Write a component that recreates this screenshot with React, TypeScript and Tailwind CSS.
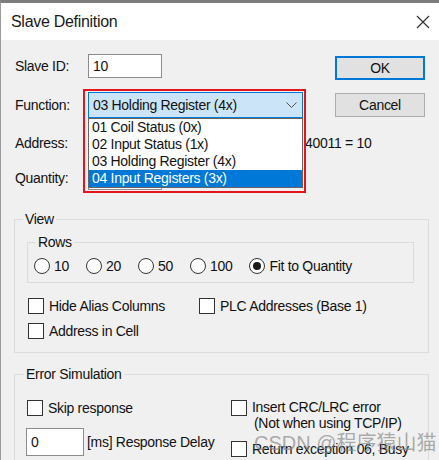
import React from "react";

function Radio({ label, checked }: { label: string; checked?: boolean }) {
  return (
    <div className="flex items-center gap-[4px]">
      <div className="w-[16px] h-[16px] rounded-full border border-[#333] bg-white flex items-center justify-center">
        {checked && <div className="w-[8px] h-[8px] rounded-full bg-[#1a1a1a]" />}
      </div>
      <span className="leading-[16px]">{label}</span>
    </div>
  );
}

function Check({ label }: { label: string }) {
  return (
    <div className="flex items-center gap-[5px] h-[18px]">
      <div className="w-[16px] h-[16px] border border-[#333] bg-white shrink-0" />
      <span className="leading-[18px] whitespace-nowrap">{label}</span>
    </div>
  );
}

export default function App() {
  return (
    <div className="relative w-[439px] h-[460px] overflow-hidden bg-[#f0f0f0] border-t-[3px] border-t-[#7d7d7d] border-l border-l-[#9a9a9a] font-['Liberation_Sans',Arial,sans-serif] text-[14px] tracking-[-0.3px] text-[#111]">
      {/* Title bar */}
      <div className="h-[37px] bg-white flex items-center justify-between pl-[10px] pr-[9px]">
        <span className="text-[16px] tracking-[-0.3px] text-[#1a1a1a]">Slave Definition</span>
        <svg width="14" height="14" viewBox="0 0 14 14">
          <path d="M1 1 L13 13 M13 1 L1 13" stroke="#333" strokeWidth="1.2" />
        </svg>
      </div>

      {/* Top section */}
      <div className="flex">
        <div className="w-[320px] shrink-0 flex flex-col pl-[14px]">
          <div className="flex items-center h-[24px] mt-[14px]">
            <span className="w-[73px]">Slave ID:</span>
            <div className="w-[74px] h-[24px] bg-white border border-[#8c8c8c] flex items-center pl-[4px]">10</div>
          </div>
          <div className="flex items-center h-[26px] mt-[14px]">
            <span className="w-[73px]">Function:</span>
            <div className="relative w-[215px] h-[26px]">
              <div className="w-full h-full bg-[#cce4f7] border border-[#0078d7] flex items-center justify-between pl-[4px] pr-[5px]">
                <span>03 Holding Register (4x)</span>
                <svg width="11" height="6" viewBox="0 0 11 6">
                  <path d="M0.5 0.5 L5.5 5.5 L10.5 0.5" stroke="#555" strokeWidth="1" fill="none" />
                </svg>
              </div>
              <div className="absolute left-0 top-full w-full bg-white border border-[#646464] z-10 flex flex-col">
                <div className="h-[17px] leading-[17px] pl-[3px]">01 Coil Status (0x)</div>
                <div className="h-[17px] leading-[17px] pl-[3px]">02 Input Status (1x)</div>
                <div className="h-[17px] leading-[17px] pl-[3px]">03 Holding Register (4x)</div>
                <div className="h-[17px] leading-[17px] pl-[3px] bg-[#0078d7] text-white">04 Input Registers (3x)</div>
              </div>
              <div className="absolute -left-[5px] -top-[3px] w-[223px] h-[104px] border-2 border-[#e8141c] z-20 pointer-events-none" />
            </div>
          </div>
          <div className="flex items-center h-[26px] mt-[12px]">
            <span className="w-[73px] shrink-0">Address:</span>
            <div className="w-[74px] h-[24px] shrink-0 bg-white border border-[#8c8c8c]" />
            <span className="ml-[143px] shrink-0 whitespace-nowrap">40011 = 10</span>
          </div>
          <div className="flex items-center h-[24px] mt-[10px]">
            <span className="w-[73px]">Quantity:</span>
            <div className="w-[74px] h-[24px] bg-white border border-[#8c8c8c]" />
          </div>
        </div>
        <div className="ml-auto mr-[14px] flex flex-col">
          <div className="mt-[16px] w-[90px] h-[24px] bg-[#e1e1e1] border-2 border-[#0078d7] flex items-center justify-center">OK</div>
          <div className="mt-[13px] w-[90px] h-[24px] bg-[#e1e1e1] border border-[#adadad] flex items-center justify-center">Cancel</div>
        </div>
      </div>

      {/* View group */}
      <fieldset className="mt-[20px] ml-[13px] w-[415px] border border-[#dcdcdc] pb-[12px]">
        <legend className="ml-[8px] px-[2px] leading-[18px]">View</legend>
        <fieldset className="mt-[5px] ml-[12px] w-[387px] border border-[#dcdcdc] pb-[8px]">
          <legend className="ml-[8px] px-[2px] leading-[18px]">Rows</legend>
          <div className="flex items-center gap-[17px] pl-[6px] mt-[7px] h-[16px]">
            <Radio label="10" />
            <Radio label="20" />
            <Radio label="50" />
            <Radio label="100" />
            <Radio label="Fit to Quantity" checked />
          </div>
        </fieldset>
        <div className="flex pl-[13px] mt-[14px]">
          <div className="w-[171px]">
            <Check label="Hide Alias Columns" />
          </div>
          <Check label="PLC Addresses (Base 1)" />
        </div>
        <div className="pl-[13px] mt-[7px]">
          <Check label="Address in Cell" />
        </div>
      </fieldset>

      {/* Error Simulation group */}
      <fieldset className="mt-[12px] ml-[13px] w-[415px] h-[120px] border border-[#dcdcdc]">
        <legend className="ml-[9px] px-[2px] leading-[18px]">Error Simulation</legend>
        <div className="flex pl-[12px]">
          <div className="w-[204px] flex flex-col">
            <div className="mt-[16px]">
              <Check label="Skip response" />
            </div>
            <div className="mt-[11px] flex items-center -ml-[1px]">
              <div className="w-[58px] h-[28px] bg-white border border-[#8c8c8c] flex items-center pl-[4px]">0</div>
              <span className="ml-[3px]">[ms] Response Delay</span>
            </div>
          </div>
          <div className="flex flex-col">
            <div className="mt-[16px] flex items-start gap-[5px]">
              <div className="w-[16px] h-[16px] mt-[1px] border border-[#333] bg-white shrink-0" />
              <div className="flex flex-col leading-[16px]">
                <span>Insert CRC/LRC error</span>
                <span className="pl-[2px]">(Not when using TCP/IP)</span>
              </div>
            </div>
            <div className="mt-[9px]">
              <Check label="Return exception 06, Busy" />
            </div>
          </div>
        </div>
      </fieldset>

      {/* Watermark */}
      <div className="absolute left-[253px] top-[425px] text-[20px] tracking-normal text-[#8a8a8a]/70 font-['Liberation_Sans','Noto_Sans_CJK_SC',sans-serif] pointer-events-none whitespace-nowrap">
        CSDN @程序猿山猫
      </div>
    </div>
  );
}
